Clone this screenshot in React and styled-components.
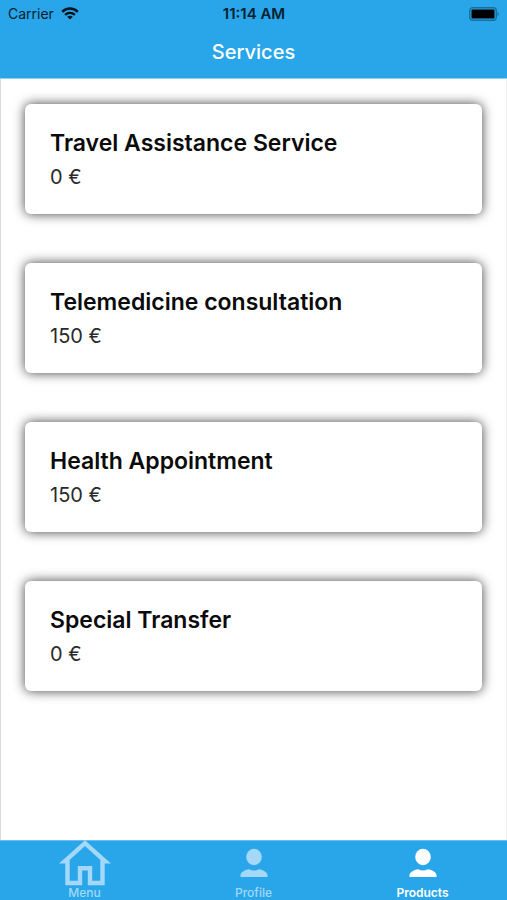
import React, { useState } from "react";
import styled, { createGlobalStyle } from "styled-components";

const GlobalStyle = createGlobalStyle`
  * {
    box-sizing: border-box;
  }

  body {
    margin: 0;
    background: #fff;
    font-family: Inter, "Liberation Sans", sans-serif;
  }
`;

const Screen = styled.div`
  display: flex;
  flex-direction: column;
  min-height: 100vh;
`;

const Header = styled.header`
  background: #29a6e9;
  border-bottom: 1px solid #8fd0f3;
`;

const StatusBar = styled.div`
  display: grid;
  grid-template-columns: 1fr auto 1fr;
  align-items: center;
  height: 27px;
  padding: 0 7px 0 8px;
  color: #06202e;
  font-size: 14px;
`;

const Carrier = styled.span`
  display: flex;
  align-items: center;
  gap: 7px;
`;

const Clock = styled.time`
  font-size: 15px;
  font-weight: 600;
`;

const BatteryIcon = styled.svg`
  justify-self: end;
`;

const Title = styled.h1`
  margin: 0;
  color: #fff;
  font-size: 20px;
  font-weight: 500;
  line-height: 51px;
  text-align: center;
`;

const ServiceList = styled.ul`
  flex: 1;
  display: flex;
  flex-direction: column;
  gap: 49px;
  margin: 0;
  padding: 25px 24px;
  border-left: 1px solid #dcdcdc;
  border-right: 1px solid #efefef;
  list-style: none;
`;

const ServiceCard = styled.li`
  padding: 23px 25px;
  background: #fff;
  border-radius: 6px;
  box-shadow: 0 0 12px rgba(0, 0, 0, 0.75);
`;

const ServiceName = styled.h2`
  margin: 0;
  color: #0b0b0b;
  font-size: 23px;
  font-weight: 600;
  line-height: 32px;
`;

const ServicePrice = styled.p`
  margin: 0;
  padding-top: 4px;
  color: #2a2a2a;
  font-size: 20px;
  line-height: 28px;
`;

const TabBar = styled.nav`
  display: grid;
  grid-template-columns: repeat(3, 1fr);
  height: 60px;
  background: #29a6e9;
  border-top: 1px solid #6abfee;
`;

const Tab = styled.button`
  display: flex;
  flex-direction: column;
  align-items: center;
  justify-content: flex-end;
  padding: 0 0 1px;
  border: 0;
  background: none;
  color: ${(props) => (props.$active ? "#fff" : "#a3d8f8")};
  font-family: inherit;
  font-size: 12px;
  font-weight: ${(props) => (props.$active ? 600 : 500)};
  line-height: 14px;
  cursor: pointer;
`;

const TabIcon = styled.span`
  display: flex;
  align-items: center;
  height: 45px;

  svg {
    overflow: visible;
  }
`;

const services = [
  { name: "Travel Assistance Service", price: 0 },
  { name: "Telemedicine consultation", price: 150 },
  { name: "Health Appointment", price: 150 },
  { name: "Special Transfer", price: 0 },
];

function WifiIcon() {
  return (
    <svg width="18" height="13" viewBox="0 0 18 13" aria-hidden="true">
      <g fill="none" stroke="#03141d" strokeWidth="2.4">
        <path d="M1.2 4.8C5.5 0.4 12.5 0.4 16.8 4.8" />
        <path d="M4.1 7.8C6.9 5.2 11.1 5.2 13.9 7.8" />
      </g>
      <path d="M6.2 9.8C7.8 8.4 10.2 8.4 11.8 9.8L9 12.6Z" fill="#03141d" />
    </svg>
  );
}

function HomeIcon() {
  return (
    <svg width="54" height="45" viewBox="0 0 54 45" aria-hidden="true">
      <path
        d="M27 2.2L6.8 20.3H9.5V42H22V27.2H32V42H44.5V20.3H47.2Z"
        fill="none"
        stroke="currentColor"
        strokeWidth="4.4"
      />
    </svg>
  );
}

function PersonIcon() {
  return (
    <svg width="28" height="30" viewBox="0 0 28 30" aria-hidden="true">
      <ellipse cx="14" cy="8" rx="7.8" ry="8.3" fill="currentColor" />
      <path
        d="M0.5 28V26.5C0.5 23 4.5 21 9.3 20.2C12 21.8 16 21.8 18.7 20.2C23.5 21 27.5 23 27.5 26.5V28Z"
        fill="currentColor"
      />
    </svg>
  );
}

const tabs = [
  { label: "Menu", Icon: HomeIcon },
  { label: "Profile", Icon: PersonIcon },
  { label: "Products", Icon: PersonIcon },
];

export default function App() {
  const [activeTab, setActiveTab] = useState("Products");

  return (
    <Screen>
      <GlobalStyle />
      <Header>
        <StatusBar>
          <Carrier>
            Carrier
            <WifiIcon />
          </Carrier>
          <Clock>11:14 AM</Clock>
          <BatteryIcon
            width="31"
            height="14"
            viewBox="0 0 31 14"
            aria-hidden="true"
          >
            <rect
              x="0.7"
              y="0.7"
              width="26.6"
              height="12.6"
              rx="3"
              fill="none"
              stroke="#187099"
              strokeWidth="1.4"
            />
            <rect x="2.5" y="2.5" width="23" height="9" rx="1" fill="#000" />
            <path d="M28.5 4.8C30.3 5.6 30.3 8.4 28.5 9.2Z" fill="#187099" />
          </BatteryIcon>
        </StatusBar>
        <Title>Services</Title>
      </Header>
      <ServiceList>
        {services.map((service) => (
          <ServiceCard key={service.name}>
            <ServiceName>{service.name}</ServiceName>
            <ServicePrice>{service.price} €</ServicePrice>
          </ServiceCard>
        ))}
      </ServiceList>
      <TabBar>
        {tabs.map(({ label, Icon }) => (
          <Tab
            key={label}
            type="button"
            $active={label === activeTab}
            onClick={() => setActiveTab(label)}
          >
            <TabIcon>
              <Icon />
            </TabIcon>
            {label}
          </Tab>
        ))}
      </TabBar>
    </Screen>
  );
}
